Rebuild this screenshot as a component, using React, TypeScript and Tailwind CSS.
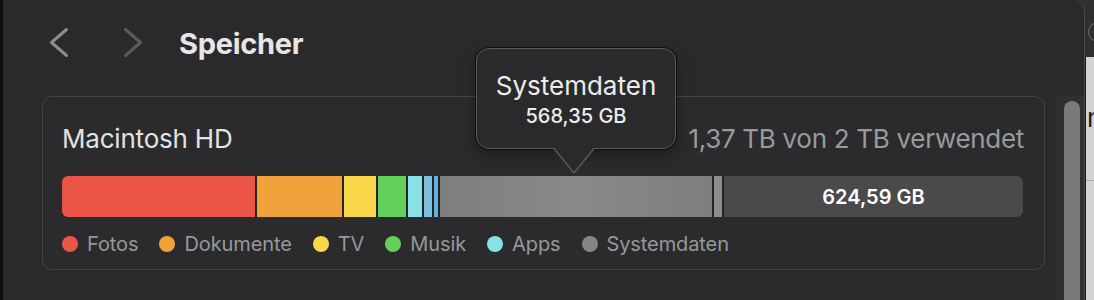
import React from "react";

type Seg = { w: number; cls: string };

const segs: Seg[] = [
  { w: 193, cls: "bg-[#eb5545]" },
  { w: 85, cls: "bg-[#f1a33b]" },
  { w: 32, cls: "bg-[#f8d74a]" },
  { w: 28, cls: "bg-[#63d05b]" },
  { w: 14, cls: "bg-[#87e1e6]" },
  { w: 8, cls: "bg-[#7cc0e0]" },
  { w: 4, cls: "bg-[#67b1dd]" },
  { w: 272, cls: "bg-gradient-to-r from-[#7e7e7e] via-[#898989] to-[#7e7e7e]" },
  { w: 8, cls: "bg-[#8c8c8c]" },
];

const legend = [
  { label: "Fotos", cls: "bg-[#eb5545]" },
  { label: "Dokumente", cls: "bg-[#f1a33b]" },
  { label: "TV", cls: "bg-[#f8d74a]" },
  { label: "Musik", cls: "bg-[#63d05b]" },
  { label: "Apps", cls: "bg-[#87e1e6]" },
  { label: "Systemdaten", cls: "bg-[#858585]" },
];

function Chevron({ dir, color }: { dir: "left" | "right"; color: string }) {
  const pts = dir === "left" ? "18.5,3.5 3.5,16.5 18.5,29.5" : "3.5,3.5 18.5,16.5 3.5,29.5";
  return (
    <svg width="22" height="33" viewBox="0 0 22 33" fill="none">
      <polyline
        points={pts}
        stroke={color}
        strokeWidth="3"
        strokeLinecap="round"
        strokeLinejoin="round"
      />
    </svg>
  );
}

export default function App() {
  return (
    <div className="relative flex h-[300px] w-[1094px] overflow-hidden bg-[#303032] font-['Inter',sans-serif]">
      {/* left dark edge */}
      <div className="w-[3px] shrink-0 bg-[#0f0f10]" />

      {/* main window */}
      <div className="relative flex w-[1082px] shrink-0 flex-col rounded-tr-[12px] border-r border-[#4a4a4c] bg-[#2a2a2c]">
        {/* header */}
        <div className="flex h-[85px] items-center pl-[45px]">
          <Chevron dir="left" color="#8d8d8f" />
          <div className="ml-[52px]">
            <Chevron dir="right" color="#5b5b5d" />
          </div>
          <div className="ml-[35px] mt-[2px] text-[29px] font-bold leading-none tracking-[-0.3px] text-[#e6e6e6]">
            Speicher
          </div>
        </div>

        {/* content */}
        <div className="flex flex-1 pl-[39px] pt-[11px]">
          <div className="flex h-[174px] w-[1003px] shrink-0 flex-col rounded-[10px] border border-[#444446] bg-[#2b2b2d] pl-[19px] pr-[20px] pt-[26px]">
            <div className="flex items-baseline justify-between text-[26px] leading-[32px]">
              <span className="tracking-[-0.2px] text-[#e2e2e2]">Macintosh HD</span>
              <span className="tracking-[-0.3px] text-[#9a9a9c]">1,37 TB von 2 TB verwendet</span>
            </div>

            <div className="mt-[21px] flex h-[41px] w-[961px] gap-[2px] overflow-hidden rounded-[6px] bg-[#232325]">
              {segs.map((s, i) => (
                <div key={i} className={`h-full shrink-0 ${s.cls}`} style={{ width: s.w }} />
              ))}
              <div className="flex h-full flex-1 items-center justify-center bg-[#4a4a4c] text-[20px] font-semibold text-white">
                624,59 GB
              </div>
            </div>

            <div className="mt-[17px] flex h-[20px] items-center gap-[21px]">
              {legend.map((l) => (
                <div key={l.label} className="flex items-center gap-[9px]">
                  <span className={`h-[16px] w-[16px] rounded-full ${l.cls}`} />
                  <span className="text-[20px] leading-none tracking-[-0.1px] text-[#98989a]">{l.label}</span>
                </div>
              ))}
            </div>
          </div>

          {/* scroll track */}
          <div className="ml-[11px] flex w-[28px] shrink-0 bg-[#303032] pl-[8px] pt-[5px]">
            <div className="h-full w-[16px] rounded-t-full bg-[#7a7a7c]" />
          </div>
        </div>
      </div>

      {/* neighbouring window strip */}
      <div className="flex flex-1 flex-col">
        <div className="relative h-[57px] bg-[#2f2f31]">
          <div className="absolute left-[3px] top-[22px] h-[20px] w-[20px] rounded-full border border-[#6a6a6c]" />
        </div>
        <div className="relative flex-1 border-l border-[#1a1a1a] bg-[#d3d3d3]">
          <span className="absolute left-[1px] top-[48px] text-[26px] leading-none text-[#222]">n</span>
          <div className="absolute left-0 right-0 top-[123px] h-px bg-[#a9a9a9]" />
        </div>
      </div>

      {/* tooltip */}
      <div className="absolute left-[476px] top-[48px] flex h-[101px] w-[200px] flex-col items-center rounded-[13px] border border-[#5b5b5d] bg-[#2a2a2c] pt-[22px] shadow-[0_0_0_1px_rgba(0,0,0,0.55),0_6px_14px_rgba(0,0,0,0.35)]">
        <div className="text-[26px] leading-[30px] text-[#ececec]">Systemdaten</div>
        <div className="mt-[3px] text-[20px] font-medium leading-[24px] text-[#ececec]">568,35 GB</div>
      </div>
      <svg
        className="absolute left-[553px] top-[147px]"
        width="42"
        height="28"
        viewBox="0 0 42 28"
        fill="none"
      >
        <polygon points="1,0 21,26 41,0" fill="#2a2a2c" />
        <polyline
          points="1,1.5 21,26 41,1.5"
          stroke="#5b5b5d"
          strokeWidth="1.3"
          strokeLinejoin="round"
          fill="none"
        />
      </svg>
    </div>
  );
}
